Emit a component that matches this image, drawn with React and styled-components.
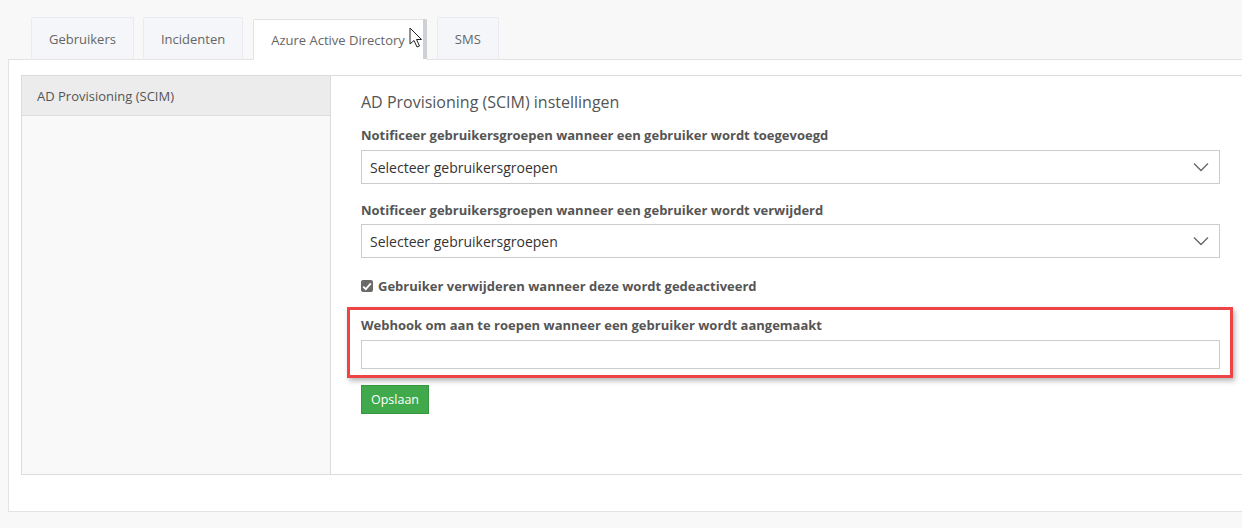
import React from "react";
import styled, { createGlobalStyle } from "styled-components";

const GlobalStyle = createGlobalStyle`
  html, body {
    margin: 0;
    padding: 0;
    background: #f8f8f8;
    font-family: "Open Sans", "Liberation Sans", sans-serif;
    color: #555;
    overflow: hidden;
  }
`;

const Page = styled.div`
  width: 1270px;
  padding-top: 17px;
`;

const TabRow = styled.div`
  display: flex;
  align-items: flex-end;
  gap: 10px;
  padding-left: 31px;
  position: relative;
  z-index: 1;
  margin-bottom: -1px;
`;

const Tab = styled.div`
  position: relative;
  height: ${(p) => (p.$active ? "39px" : "41px")};
  padding: 0 ${(p) => (p.$active ? "21px" : "17px")} 0 17px;
  display: flex;
  align-items: center;
  font-size: 13px;
  color: #666;
  background: ${(p) => (p.$active ? "#fff" : "#f4f6f9")};
  border: 1px solid ${(p) => (p.$active ? "#e3e3e3" : "#e9ebee")};
  border-bottom: ${(p) => (p.$active ? "1px solid #fff" : "1px solid #e3e3e3")};
  border-radius: 2px 2px 0 0;
  &:first-child {
    margin-right: -1px;
  }
`;

const TabShade = styled.span`
  position: absolute;
  top: -1px;
  right: -1px;
  width: 4px;
  bottom: 0;
  background: #cdd0d4;
  border-radius: 0 2px 0 0;
`;

const Cursor = styled.svg`
  position: absolute;
  left: 155px;
  top: 7px;
`;

const Panel = styled.div`
  margin-left: 8px;
  background: #fff;
  border: 1px solid #e3e3e3;
  padding: 15px 0 36px 12px;
`;

const Box = styled.div`
  display: flex;
  border: 1px solid #dcdcdc;
  min-height: 398px;
`;

const Sidebar = styled.div`
  width: 308px;
  background: #f9f9f9;
  border-right: 1px solid #dcdcdc;
`;

const SideItem = styled.div`
  height: 39px;
  display: flex;
  align-items: center;
  padding-left: 15px;
  font-size: 13px;
  color: #555;
  background: #ececec;
  border-bottom: 1px solid #dcdcdc;
`;

const Content = styled.div`
  width: 859px;
  padding: 16px 0 0 30px;
`;

const Heading = styled.h3`
  margin: 0;
  font-size: 16px;
  line-height: 20px;
  font-weight: 400;
  color: #555;
`;

const Label = styled.div`
  font-size: 13px;
  line-height: 18px;
  font-weight: 700;
  color: #555;
  margin-top: ${(p) => p.$top || 0}px;
  margin-bottom: ${(p) => p.$bottom || 6}px;
`;

const Select = styled.div`
  height: 34px;
  box-sizing: border-box;
  border: 1px solid #cccccc;
  display: flex;
  align-items: center;
  justify-content: space-between;
  padding: 0 10px 0 8px;
  font-size: 14px;
  color: #333;
  background: #fff;
`;

const CheckRow = styled.label`
  display: flex;
  align-items: center;
  gap: 5px;
  margin-top: 19px;
  height: 18px;
  font-size: 13px;
  font-weight: 700;
  color: #555;
`;

const CheckBox = styled.span`
  width: 12px;
  height: 12px;
  border-radius: 2px;
  background: #6a6a6a;
  display: flex;
  align-items: center;
  justify-content: center;
`;

const Highlight = styled.div`
  margin: 12px -13px 0 -14px;
  border: 3px solid #ef4444;
  padding: 6px 10px 6px 11px;
  box-shadow: 2px 3px 5px rgba(0, 0, 0, 0.28);
`;

const Input = styled.input`
  display: block;
  width: 100%;
  height: 29px;
  box-sizing: border-box;
  border: 1px solid #cccccc;
  outline: none;
  font-family: inherit;
  font-size: 13px;
`;

const Button = styled.button`
  margin-top: 7px;
  height: 29px;
  padding: 0 9px;
  background: #3fa94b;
  border: 1px solid #37973f;
  color: #fff;
  font-family: inherit;
  font-size: 12.5px;
  border-radius: 0;
`;

function Chevron() {
  return (
    <svg width="16" height="10" viewBox="0 0 16 10">
      <path d="M1 1.5 L8 8.5 L15 1.5" fill="none" stroke="#666" strokeWidth="1.3" />
    </svg>
  );
}

const tabs = ["Gebruikers", "Incidenten", "Azure Active Directory", "SMS"];

export default function App() {
  return (
    <>
      <GlobalStyle />
      <Page>
        <TabRow>
          {tabs.map((t) => {
            const active = t === "Azure Active Directory";
            return (
              <Tab key={t} $active={active}>
                {t}
                {active && <TabShade />}
                {active && (
                  <Cursor width="14" height="22" viewBox="0 0 14 22">
                    <path
                      d="M1 1 L1 17 L5 13.5 L8 20 L10.5 19 L7.5 12.5 L12.5 12.5 Z"
                      fill="#fff"
                      stroke="#222"
                      strokeWidth="1"
                      strokeLinejoin="round"
                    />
                  </Cursor>
                )}
              </Tab>
            );
          })}
        </TabRow>
        <Panel>
          <Box>
            <Sidebar>
              <SideItem>AD Provisioning (SCIM)</SideItem>
            </Sidebar>
            <Content>
              <Heading>AD Provisioning (SCIM) instellingen</Heading>
              <Label $top={14}>Notificeer gebruikersgroepen wanneer een gebruiker wordt toegevoegd</Label>
              <Select>
                Selecteer gebruikersgroepen
                <Chevron />
              </Select>
              <Label $top={17} $bottom={5}>
                Notificeer gebruikersgroepen wanneer een gebruiker wordt verwijderd
              </Label>
              <Select>
                Selecteer gebruikersgroepen
                <Chevron />
              </Select>
              <CheckRow>
                <CheckBox>
                  <svg width="10" height="9" viewBox="0 0 10 9">
                    <path d="M1.2 4.6 L3.8 7.2 L8.8 1.4" fill="none" stroke="#fff" strokeWidth="1.8" />
                  </svg>
                </CheckBox>
                Gebruiker verwijderen wanneer deze wordt gedeactiveerd
              </CheckRow>
              <Highlight>
                <Label>Webhook om aan te roepen wanneer een gebruiker wordt aangemaakt</Label>
                <Input type="text" />
              </Highlight>
              <Button>Opslaan</Button>
            </Content>
          </Box>
        </Panel>
      </Page>
    </>
  );
}
